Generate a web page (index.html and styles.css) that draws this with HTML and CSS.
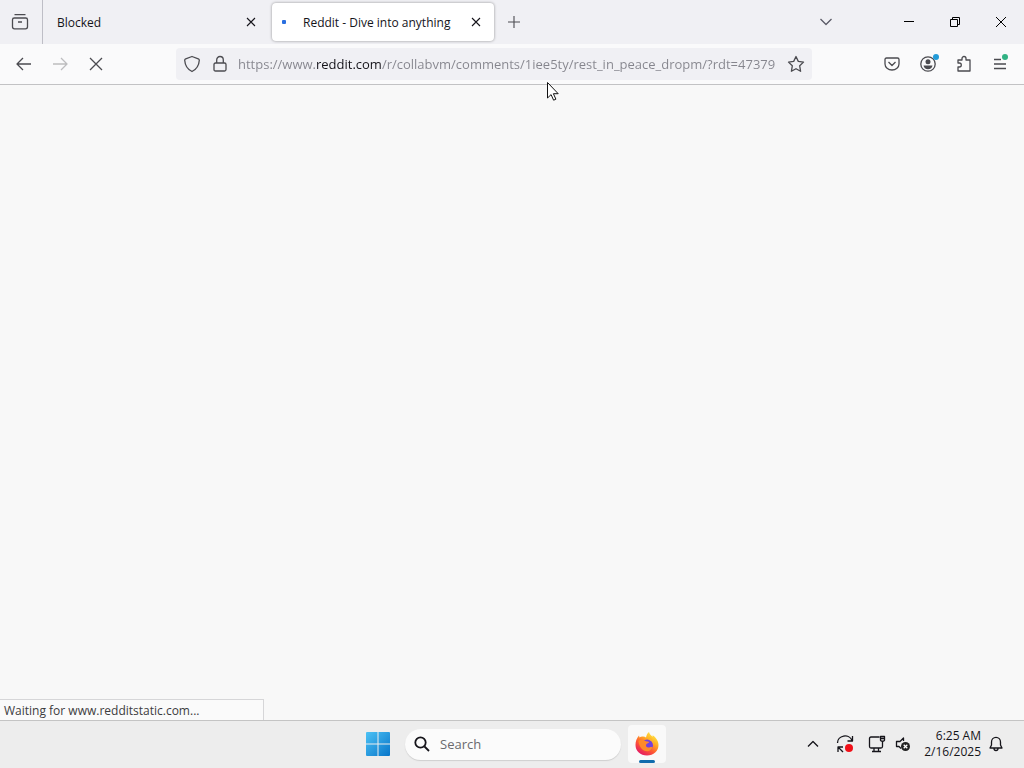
FILE: index.html
```html
<!DOCTYPE html>
<html lang="en">
<head>
<meta charset="utf-8">
<title>Reddit - Dive into anything</title>
<meta name="viewport" content="width=device-width, initial-scale=1">
<link rel="stylesheet" href="styles.css">
</head>
<body>
<div class="desktop">
  <header class="tabbar">
    <button class="recent" aria-label="Recent browsing"><svg width="20" height="20" viewBox="0 0 20 20"><path d="M4.500 2.700h11M4.300 6h11.400q1.800 0 1.800 1.800v7q0 2-2 2h-11q-2 0-2-2v-7Q2.500 6 4.300 6zM8 10h4"/></svg></button>
    <div class="tab">
      <span class="tab-title">Blocked</span>
      <button class="tab-close" aria-label="Close tab"><svg width="10" height="10" viewBox="0 0 10 10"><path d="M1 1l8 8M9 1l-8 8"/></svg></button>
    </div>
    <div class="tab tab-active">
      <span class="loading"></span>
      <span class="tab-title">Reddit - Dive into anything</span>
      <button class="tab-close" aria-label="Close tab"><svg width="10" height="10" viewBox="0 0 10 10"><path d="M1 1l8 8M9 1l-8 8"/></svg></button>
    </div>
    <button class="new-tab" aria-label="New tab"><svg width="14" height="14" viewBox="0 0 14 14"><path d="M7 1v12M1 7h12"/></svg></button>
    <div class="window-controls">
      <button class="list-tabs" aria-label="List all tabs"><svg width="14" height="10" viewBox="0 0 14 10"><path d="M1.500 2L7 7.500 12.500 2"/></svg></button>
      <button class="win" aria-label="Minimize"><svg width="12" height="12" viewBox="0 0 12 12"><path d="M1 5.500h10"/></svg></button>
      <button class="win" aria-label="Restore"><svg width="12" height="12" viewBox="0 0 12 12"><path d="M1.500 3.500h7v7h-7zM3.500 3.500v-2h7v7h-2"/></svg></button>
      <button class="win" aria-label="Close"><svg width="12" height="12" viewBox="0 0 12 12"><path d="M1 1l10 10M11 1L1 11"/></svg></button>
    </div>
  </header>
  <nav class="toolbar">
    <div class="nav-buttons">
      <button aria-label="Back"><svg width="18" height="16" viewBox="0 0 18 16"><path d="M16 8H2.500M8 2L2 8l6 6"/></svg></button>
      <button class="disabled" disabled aria-label="Forward"><svg width="18" height="16" viewBox="0 0 18 16"><path d="M2 8h13.500M10 2l6 6-6 6"/></svg></button>
      <button aria-label="Stop"><svg width="14" height="14" viewBox="0 0 14 14"><path d="M1 1l12 12M13 1L1 13"/></svg></button>
    </div>
    <div class="urlbar">
      <button aria-label="Tracking protection"><svg width="18" height="18" viewBox="0 0 18 18"><path d="M9 1.500l6.300 2.300c.7.300 1 .7 1 1.400C16 10 14 14 9 16.500 4 14 2 10 1.700 5.200c0-.7.300-1.100 1-1.400z"/></svg></button>
      <button aria-label="Site information"><svg width="14" height="18" viewBox="0 0 14 18"><path d="M2.500 8h9q1.500 0 1.500 1.500v5q0 1.500-1.500 1.500h-9Q1 16 1 14.500v-5Q1 8 2.500 8zM3.700 8V5a3.300 3.500 0 0 1 6.600 0v3"/></svg></button>
      <input class="url" type="text" aria-label="Address" spellcheck="false" value="https://www.reddit.com/r/collabvm/comments/1iee5ty/rest_in_peace_dropm/?rdt=47379">
      <button aria-label="Bookmark this page"><svg width="18" height="18" viewBox="0 0 18 18"><path d="M9 1.500l2.300 4.900 5.200.7-3.800 3.700.9 5.500L9 13.700l-4.600 2.600.9-5.500L1.500 7.100l5.200-.7z"/></svg></button>
    </div>
    <div class="actions">
      <button aria-label="Save to Pocket"><svg width="16" height="16" viewBox="0 0 16 16"><path d="M2.500 2h11q1.500 0 1.500 1.500V8a7 6 0 0 1-14 0V3.500Q1 2 2.500 2zM4.500 6L8 9.500 11.500 6"/></svg></button>
      <button aria-label="Account"><svg width="18" height="18" viewBox="0 0 18 18"><circle cx="9" cy="9" r="7.200"/><circle class="solid" cx="9" cy="6.700" r="2.500"/><path class="solid" d="M4.500 10.500h9c-.3 2.400-2.100 3.700-4.500 3.700s-4.200-1.300-4.500-3.700z"/></svg><span class="badge badge-blue"></span></button>
      <button aria-label="Extensions"><svg width="16" height="18" viewBox="0 0 16 18"><path d="M2 5h4V3.500a2 2 0 0 1 4 0V5h4v11H2v-4h1.300a2 2 0 0 0 0-4H2z"/></svg></button>
      <button aria-label="Application menu"><svg width="14" height="14" viewBox="0 0 14 14"><path d="M1 2.500h7M1 7h12M1 11.500h12"/></svg><span class="badge badge-green"></span></button>
    </div>
  </nav>
  <main class="page">
    <div class="status" role="status">Waiting for www.redditstatic.com...</div>
  </main>
  <footer class="taskbar">
    <div class="apps">
      <button class="start" aria-label="Start"><svg width="24" height="24" viewBox="0 0 24 24"><defs><linearGradient id="win" gradientUnits="userSpaceOnUse" x1="0" y1="0" x2="24" y2="24"><stop stop-color="#4cc2f5"/><stop offset="1" stop-color="#0875c9"/></linearGradient></defs><path fill="url(#win)" d="M1 0h10.500v11.500H0V1q0-1 1-1zM12.500 0H23q1 0 1 1v10.500H12.500zM0 12.500h11.500V24H1q-1 0-1-1zM12.500 12.500H24V23q0 1-1 1H12.500z"/></svg></button>
      <label class="search"><svg width="16" height="16" viewBox="0 0 16 16"><circle cx="6.500" cy="6.500" r="5.200"/><path d="M10.500 10.500L15 15"/></svg><input type="search" placeholder="Search" aria-label="Search"></label>
      <button class="firefox" aria-label="Firefox"><svg width="24" height="24" viewBox="0 0 24 24"><defs><linearGradient id="fox" x1=".85" y1=".05" x2=".25" y2=".95"><stop stop-color="#fff14a"/><stop offset=".35" stop-color="#ffae24"/><stop offset=".65" stop-color="#ff5b32"/><stop offset="1" stop-color="#e51c62"/></linearGradient></defs><path fill="url(#fox)" d="M14 0c.5 2.300 2 3.300 3.700 4.800.1-.5 0-1-.2-1.600C21 5.200 23.500 9 23.500 13c0 6-5 10.500-11.500 10.500S.5 18.900.5 13C.5 9.500 1.500 6.500 4 3.500l.5 2c.8-.7 1.800-1 2.900-1 1.500-.2 2.600.2 3.600 1 .4-2.200 1.400-4.300 3-5.500z"/><circle cx="12.200" cy="13.200" r="5.800" fill="#7541dc"/><path fill="#ff8a29" d="M3.500 9c2-1.800 5-1.800 7.500.3 1.300.3 2.400.2 3.200.7-.5 1.300-2.200 1.500-3 2.500-.7 1-.2 2.800 1.800 3 2 .1 3-1 4.500-.3-.7 2.300-2.600 4-5.300 4C7.500 19.200 4 15 3.500 9z"/><path fill="#ffb52c" d="M14.500 5c3 2 4.700 5 4.300 8.500-.5-2.500-2-4.700-4.600-5.500z"/></svg></button>
    </div>
    <div class="tray">
      <button aria-label="Show hidden icons"><svg width="12" height="8" viewBox="0 0 12 8"><path d="M1 6.500l5-5 5 5"/></svg></button>
      <button aria-label="Windows Update"><svg width="18" height="18" viewBox="0 0 18 18"><path d="M1.500 8A7.500 7 0 0 1 16 5.500M16.500 1v5h-5M7 12H2v5M2 12l5 5"/><circle class="alert" cx="13" cy="13" r="4"/></svg></button>
      <button aria-label="Network"><svg width="18" height="18" viewBox="0 0 18 18"><path d="M11.500 2H3Q1.500 2 1.500 3.500v8Q1.500 13 3 13h10q1.500 0 1.500-1.500V9M6 13v3M10.500 13v3M4 16.500h9M12.500 1.500h4v3.700l-1 1h-2l-1-1zM14.500 6v4M12.500 3.500h4"/></svg></button>
      <button aria-label="Volume"><svg width="16" height="18" viewBox="0 0 16 18"><path d="M8.500 6V3L5 6.500H1.500v5H4l2 2"/><circle class="mute" cx="10.500" cy="11.500" r="4.500"/><path class="mute-x" d="M8.700 9.700l3.600 3.600M12.300 9.700l-3.600 3.600"/></svg></button>
      <button class="clock"><time>6:25 AM</time><time>2/16/2025</time></button>
      <button aria-label="Notifications"><svg width="14" height="16" viewBox="0 0 14 16"><path d="M1 12h12l-1.500-3V6a4.500 4.700 0 0 0-9 0v3zM5 12.500a2 2 0 0 0 4 0"/></svg></button>
    </div>
  </footer>
  <svg class="cursor" width="14" height="22" viewBox="0 0 14 22" aria-hidden="true"><path d="M1.500 1.500v15.500l3.600-3.400 2.500 5.600 2.300-1-2.500-5.500h4.800z"/></svg>
</div>
</body>
</html>
```
FILE: styles.css
```css
* { box-sizing: border-box; }

body {
  margin: 0;
  font-family: "Open Sans", "Noto Sans", sans-serif;
  font-size: 12px;
  color: #15141a;
}

button {
  display: flex;
  align-items: center;
  justify-content: center;
  flex-shrink: 0;
  padding: 0;
  border: 0;
  background: none;
  color: inherit;
  font: inherit;
}

input {
  min-width: 0;
  padding: 0;
  border: 0;
  outline: 0;
  background: none;
  font: inherit;
}

svg {
  display: block;
  flex-shrink: 0;
  fill: none;
  stroke: currentColor;
  stroke-width: 1.3;
  stroke-linejoin: round;
}

.desktop {
  position: relative;
  display: flex;
  flex-direction: column;
  height: 100vh;
  background: #f8f8f8;
}

/* Tab strip */
.tabbar {
  display: flex;
  align-items: center;
  height: 44px;
  background: #f0f0f4;
}

.recent {
  width: 43px;
  height: 44px;
  padding-right: 2px;
  border-right: 1px solid #bebec6;
  color: #4b4b50;
}

.tab {
  display: flex;
  align-items: center;
  flex: 0 1 222px;
  min-width: 0;
  height: 38px;
  padding: 0 12px 0 14px;
}

.tab:not(.tab-active) { margin-right: 7px; padding-right: 8px; }

.tab-active {
  margin-right: 5px;
  padding-left: 10px;
  border-radius: 4px;
  background: #fff;
  box-shadow: 0 0 3px rgba(0, 0, 0, 0.4);
}

.tab-title {
  flex: 1;
  overflow: hidden;
  white-space: nowrap;
}

.tab-close { width: 12px; height: 24px; }
.tab-close svg { stroke-width: 1.1; }

.loading {
  width: 4px;
  height: 4px;
  margin-right: 17px;
  border-radius: 1px;
  background: #2a6fe0;
}

.new-tab { width: 30px; height: 32px; color: #4b4b50; }
.new-tab svg { stroke-width: 1.1; }

.window-controls {
  display: flex;
  margin-left: auto;
}

.list-tabs { width: 32px; height: 32px; margin-right: 44px; color: #5b5b66; }
.win { width: 46px; height: 32px; color: #000; }
.win svg { stroke-width: 1; stroke-linejoin: miter; }

/* Navigation toolbar */
.toolbar {
  display: flex;
  align-items: center;
  height: 41px;
  padding: 0 6px;
  border-bottom: 1px solid #c2c2c4;
  background: #fafafb;
  color: #4b4b50;
}

.nav-buttons, .actions { display: flex; }
.nav-buttons button, .actions button { position: relative; width: 36px; height: 32px; }
.nav-buttons .disabled { color: #bdbdbf; }

.urlbar {
  display: flex;
  align-items: center;
  flex: 1;
  min-width: 0;
  height: 32px;
  margin: 0 62px;
  padding: 0 2px;
  border-radius: 4px;
  background: #f0f0f4;
}

.urlbar button { width: 28px; height: 32px; }

.url {
  flex: 1;
  height: 24px;
  margin-left: 4px;
  font-size: 13px;
  color: transparent;
  caret-color: #15141a;
  background: linear-gradient(90deg, #85858d 77px, #15141a 77px 143px, #85858d 143px);
  background-clip: text;
}

.badge {
  position: absolute;
  top: 6px;
  right: 7px;
  width: 6px;
  height: 6px;
  border-radius: 50%;
}

.badge-blue { background: #229bd8; }
.badge-green { right: 10px; background: #31b283; }
.solid { fill: currentColor; stroke: none; }

/* Page area */
.page {
  display: flex;
  flex: 1;
  align-items: flex-end;
}

.status {
  flex: 0 1 264px;
  height: 21px;
  padding: 0 4px;
  border: 1px solid #d6d6d8;
  border-width: 1px 1px 0 0;
  line-height: 22px;
  color: #3c3c40;
  background: #fafafa;
}

/* Taskbar */
.taskbar {
  display: grid;
  grid-template-columns: 1fr auto 1fr;
  align-items: center;
  height: 48px;
  padding-bottom: 1px;
  border-top: 1px solid #c4c4c4;
  background: #ededed;
}

.apps {
  grid-column: 2;
  display: flex;
  align-items: center;
}

.start { width: 40px; height: 40px; margin-right: 7px; }
.start svg, .firefox svg { stroke: none; }

.search {
  display: flex;
  align-items: center;
  gap: 10px;
  width: 216px;
  height: 31px;
  padding: 0 9px;
  border-radius: 16px;
  background: #fbfbfb;
  box-shadow: 0 1px 1px #cfcfcf;
}

.search svg { stroke-width: 1.8; }
.search input { flex: 1; font-size: 13px; }
.search input::placeholder { color: #6a6a6e; opacity: 1; }

.firefox {
  position: relative;
  width: 38px;
  height: 38px;
  margin-left: 7px;
  border-radius: 4px;
  background: #f9f9f9;
}

.firefox::after {
  content: "";
  position: absolute;
  bottom: 0;
  left: 11px;
  width: 16px;
  height: 3px;
  border-radius: 2px;
  background: #0f6cad;
}

.tray {
  display: flex;
  align-items: center;
  justify-content: flex-end;
  padding-right: 21px;
}

.tray button { width: 32px; height: 32px; }
.tray button:nth-child(4) { width: 20px; }

.tray .clock {
  flex-direction: column;
  align-items: flex-end;
  width: 68px;
  margin-right: 8px;
  line-height: 16px;
  font-size: 12px;
}

.tray .clock + button { width: 14px; }
.alert { fill: #f01018; stroke: none; }
.mute { fill: #222; stroke: none; }
.mute-x { stroke: #fff; }

.cursor {
  position: absolute;
  top: 81px;
  left: 546px;
  fill: #fff;
  stroke: #111;
  stroke-width: 1;
  pointer-events: none;
}
```
